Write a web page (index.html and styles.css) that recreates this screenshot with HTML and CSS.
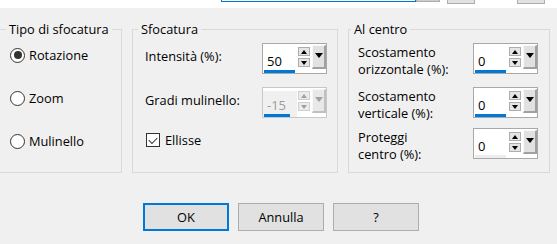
FILE: index.html
```html
<!DOCTYPE html>
<html lang="it">
<head>
  <meta charset="UTF-8" />
  <title>Sfocatura radiale</title>
  <link rel="stylesheet" href="styles.css">
</head>
<body>
  <div class="topbar">
    <div class="combo"></div>
    <div class="combo-btn"></div>
    <div class="top-btn"></div>
    <div class="top-btn top-btn-far"></div>
  </div>

  <div class="groups">
    <fieldset class="group group-type">
      <legend>Tipo di sfocatura</legend>
      <label class="radio-row"><span class="radio checked"></span>Rotazione</label>
      <label class="radio-row"><span class="radio"></span>Zoom</label>
      <label class="radio-row"><span class="radio"></span>Mulinello</label>
    </fieldset>

    <fieldset class="group group-blur">
      <legend>Sfocatura</legend>
      <div class="row">
        <span class="row-label">Intensità (%):</span>
        <div class="spin">
          <div class="spin-field"><span class="spin-value">50</span><span class="spin-bar"></span></div>
          <div class="spin-arrows"><span class="arrow up"></span><span class="arrow down"></span></div>
          <span class="spin-drop"></span>
        </div>
      </div>
      <div class="row row-second">
        <span class="row-label">Gradi mulinello:</span>
        <div class="spin disabled">
          <div class="spin-field"><span class="spin-value">-15</span><span class="spin-bar bar-short"></span></div>
          <div class="spin-arrows"><span class="arrow up"></span><span class="arrow down"></span></div>
          <span class="spin-drop"></span>
        </div>
      </div>
      <label class="check-row"><span class="check"></span>Ellisse</label>
    </fieldset>

    <fieldset class="group group-center">
      <legend>Al centro</legend>
      <div class="row">
        <span class="row-label two-line">Scostamento<br>orizzontale (%):</span>
        <div class="spin">
          <div class="spin-field"><span class="spin-value">0</span><span class="spin-bar"></span></div>
          <div class="spin-arrows"><span class="arrow up"></span><span class="arrow down"></span></div>
          <span class="spin-drop"></span>
        </div>
      </div>
      <div class="row row-second">
        <span class="row-label two-line">Scostamento<br>verticale (%):</span>
        <div class="spin">
          <div class="spin-field"><span class="spin-value">0</span><span class="spin-bar"></span></div>
          <div class="spin-arrows"><span class="arrow up"></span><span class="arrow down"></span></div>
          <span class="spin-drop"></span>
        </div>
      </div>
      <div class="row row-third">
        <span class="row-label two-line">Proteggi<br>centro (%):</span>
        <div class="spin">
          <div class="spin-field"><span class="spin-value">0</span><span class="spin-bar bar-empty"></span></div>
          <div class="spin-arrows"><span class="arrow up"></span><span class="arrow down"></span></div>
          <span class="spin-drop"></span>
        </div>
      </div>
    </fieldset>
  </div>

  <div class="buttons">
    <button class="btn btn-default">OK</button>
    <button class="btn">Annulla</button>
    <button class="btn">?</button>
  </div>
</body>
</html>
```

FILE: styles.css
```css
body {
  margin: 0;
  width: 557px;
  height: 244px;
  overflow: hidden;
  background: #f0f0f0;
  font-family: "Segoe UI", "Open Sans", sans-serif;
  font-size: 12.8px;
  line-height: 16px;
  color: #000;
}
.topbar {
  display: flex;
  align-items: flex-start;
  height: 8px;
  overflow: hidden;
  background: #fff;
}
.combo {
  box-sizing: border-box;
  width: 195px;
  height: 20px;
  margin: -18px 0 0 221px;
  border: 1px solid #0078d7;
  background: #fff;
}
.combo-btn {
  box-sizing: border-box;
  width: 24px;
  height: 20px;
  margin-top: -18px;
  border: 1px solid #adadad;
  background: #cccccc;
}
.top-btn {
  box-sizing: border-box;
  width: 28px;
  height: 20px;
  margin: -16px 0 0 7px;
  border: 1px solid #adadad;
  background: #e1e1e1;
}
.top-btn-far {
  margin-left: 42px;
}
.groups {
  display: flex;
  gap: 10px;
  margin: 13px 0 0 -2px;
}
.group {
  box-sizing: border-box;
  height: 152px;
  min-width: 0;
  margin: 0;
  padding: 6px 0 0;
  border: 1px solid #d9d9d9;
}
.group legend {
  margin-left: -7px;
  padding: 0 3px;
  line-height: 16px;
}
.group-type {
  width: 124px;
  padding: 10px 0 0 11px;
}
.group-type legend {
  margin-left: -4px;
}
.group-blur {
  width: 206px;
  padding: 6px 10px 0 12px;
}
.group-center {
  width: 202px;
  padding: 6px 11px 0 9px;
}
.radio-row {
  display: flex;
  align-items: center;
  height: 16px;
  margin-bottom: 27px;
}
.radio {
  box-sizing: border-box;
  width: 15px;
  height: 15px;
  margin-right: 4px;
  border: 1px solid #333;
  border-radius: 50%;
  background: #fff;
  position: relative;
}
.radio.checked::after {
  content: "";
  position: absolute;
  left: 2.5px;
  top: 2.5px;
  width: 8px;
  height: 8px;
  border-radius: 50%;
  background: #333;
}
.row {
  display: flex;
  align-items: center;
  justify-content: space-between;
  height: 31px;
}
.row-second {
  margin-top: 13px;
}
.row-third {
  margin-top: 10px;
}
.row-label {
  margin-bottom: 5px;
}
.row-label.two-line {
  margin: 4px 0 0;
  line-height: 17px;
}
.check-row {
  display: flex;
  align-items: center;
  height: 16px;
  margin: 14px 0 0 1px;
}
.check {
  box-sizing: border-box;
  width: 14px;
  height: 14px;
  margin-right: 5px;
  border: 1px solid #333;
  background: #fff;
  position: relative;
}
.check::after {
  content: "";
  position: absolute;
  left: 2px;
  top: 1px;
  width: 7px;
  height: 4px;
  border-left: 1px solid #333;
  border-bottom: 1px solid #333;
  transform: translate(0, 2px) rotate(-45deg);
  transform-origin: center;
}
.spin {
  box-sizing: border-box;
  display: flex;
  align-items: flex-start;
  width: 65px;
  height: 31px;
  border: 1px solid #a9a9a9;
  background: #fff;
}
.spin-field {
  display: flex;
  flex-direction: column;
  width: 34px;
  height: 29px;
}
.spin-value {
  padding: 9px 0 0 4px;
  font-size: 13px;
  line-height: 17px;
}
.spin-bar {
  width: 31px;
  height: 3px;
  margin-left: 1px;
  background: #0078d7;
}
.bar-short {
  width: 26px;
}
.bar-empty {
  background: #ececec;
}
.spin-arrows {
  display: flex;
  flex-direction: column;
  gap: 2px;
  margin: 3px 0 0 1px;
}
.arrow {
  box-sizing: border-box;
  width: 12px;
  height: 9px;
  border: 1px solid #adadad;
  background: #e5e5e5;
  display: flex;
  align-items: center;
  justify-content: center;
}
.arrow::after {
  content: "";
  border-left: 3.5px solid transparent;
  border-right: 3.5px solid transparent;
}
.arrow.up::after {
  border-bottom: 4px solid #000;
}
.arrow.down::after {
  border-top: 4px solid #000;
}
.spin-drop {
  box-sizing: border-box;
  display: flex;
  justify-content: center;
  width: 14px;
  height: 24px;
  margin: 1px 0 0 2px;
  padding-top: 7px;
  border-top: 1px solid #f8f8f8;
  border-left: 1px solid #f8f8f8;
  border-right: 2px solid #a0a0a0;
  border-bottom: 2px solid #a0a0a0;
  background: #e1e1e1;
}
.spin-drop::after {
  content: "";
  height: 0;
  border-left: 4.5px solid transparent;
  border-right: 4.5px solid transparent;
  border-top: 5px solid #000;
}
.spin.disabled {
  border-color: #c8c8c8;
}
.spin.disabled .spin-field {
  background: #f0f0f0;
  border-top: 3px solid #fff;
  height: 26px;
}
.spin.disabled .spin-value {
  padding-top: 6px;
  color: #9d9d9d;
}
.spin.disabled .arrow {
  border-color: #cfcfcf;
  background: #ececec;
}
.spin.disabled .arrow.up::after {
  border-bottom-color: #a0a0a0;
}
.spin.disabled .arrow.down::after {
  border-top-color: #a0a0a0;
}
.spin.disabled .spin-drop {
  border-right-color: #c0c0c0;
  border-bottom-color: #c0c0c0;
  background: #e8e8e8;
}
.spin.disabled .spin-drop::after {
  border-top-color: #a0a0a0;
}
.buttons {
  display: flex;
  gap: 9px;
  margin: 30px 0 0 143px;
}
.btn {
  box-sizing: border-box;
  width: 86px;
  height: 28px;
  padding: 0;
  border: 1px solid #adadad;
  background: #e1e1e1;
  font: inherit;
  color: #000;
}
.btn-default {
  border: 2px solid #0078d7;
}
```
